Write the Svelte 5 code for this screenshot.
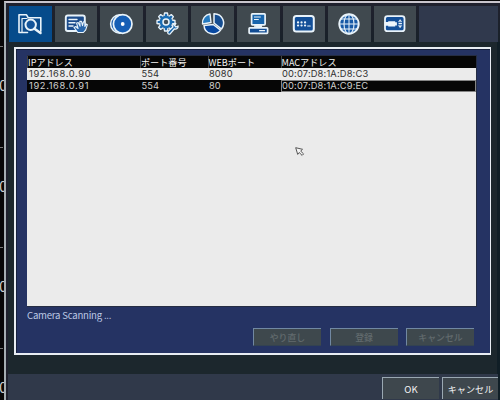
<script>
  const tabs = ['search', 'register', 'disc', 'settings', 'chart', 'system', 'keypad', 'network', 'device'];
  const rows = [
    ['192.168.0.90', '554', '8080', '00:07:D8:1A:D8:C3'],
    ['192.168.0.91', '554', '80', '00:07:D8:1A:C9:EC']
  ];
  const marks = [0, 1, 2, 3];
  const spokes = [0, 45, 90, 135, 180, 225, 270, 315];
</script>

<div class="screen">
  <div class="behind">
    {#each marks as m (m)}
      <div class="mark"><i></i><b>0</b></div>
    {/each}
  </div>
  <div class="window">
    <nav>
      {#each tabs as tab, i (tab)}
        <button class="tab" class:active={i === 0} aria-label={tab}>
          <svg width="26" height="26" viewBox="0 0 26 26" fill="none" stroke="#e9f3fa" stroke-width="1.7" stroke-linejoin="round" stroke-linecap="round">
            {#if tab === 'search'}
              <path d="M10.5 21.5H2V3.8h7.5l1.8 3H23.8v13.5" fill="#0c4b8c" stroke-width="1.6" />
              <path d="M5 21V7.5h5" stroke-width="1.2" />
              <circle cx="13.7" cy="13.8" r="5.2" fill="#14549a" stroke-width="2" />
              <path d="m17.5 17.7 6 4.3" stroke-width="2.6" />
            {:else if tab === 'register'}
              <rect x="2.8" y="4.5" width="19" height="15.5" rx="2" fill="#1c4c8c" stroke-width="1.9" />
              <path d="M6 8.5h8M6 11.8h6M6 15h4" stroke-width="1.4" />
              <path d="m14.8 21.5-3.8-5 1.8-1 2.3 2-1.5-5.4 1.6-.6 1.9 3.7-.3-4.8 1.7-.1 1 4.4.9-3.9 1.5.3v4.3l1.3-2.4 1.2.7-1.7 5.2-2.3 2.6z" fill="#2866ac" stroke-width="1.1" />
            {:else if tab === 'disc'}
              <circle cx="11.9" cy="13" r="9.3" fill="#2463ae" stroke-width="1.5" />
              <circle cx="14.7" cy="13" r="9.3" fill="#155eb5" stroke-width="1.7" />
              <circle cx="14.7" cy="13" r="1.9" fill="#fff" stroke="none" />
            {:else if tab === 'settings'}
              <g transform="translate(1 0)">
                {#each spokes as a (a)}
                  <path d="M9 4.9 9.5 2h3l.5 2.9" fill="#226bb0" stroke-width="1.3" transform={`rotate(${a} 11 11)`} />
                {/each}
                <circle cx="11" cy="11" r="6.2" fill="#176cb5" stroke="none" />
                <circle cx="11" cy="11" r="3" fill="#40505c" stroke-width="1.5" />
                <path d="m13.2 20.3 4.6-4.2c-.5-2.4 1-3.8 3-3.6l-1.2 2.1 1.4 1.4 2.1-1c.2 2.2-1.5 3.6-3.8 3l-4 4.7c-1.7 1.1-3.5-.6-2.1-2.4z" fill="#1763a9" stroke-width="1.3" />
              </g>
            {:else if tab === 'chart'}
              <path d="M14 12V2.7C23 3 26 12 21.5 18z" fill="#154d91" stroke-width="1.5" />
              <path d="m13.2 13.5 7.4 5.6C16 25.5 4.5 23.5 4 14.5z" fill="#0848a0" stroke-width="1.5" />
              <path d="M11 11.5 2.5 13C2 8 5 3.8 10 3z" fill="#257ac0" stroke-width="1.4" />
            {:else if tab === 'system'}
              <g transform="translate(.6 0)">
                <rect x="6" y="2.8" width="13.5" height="11" rx=".7" fill="#1865ad" />
                <path d="M8.8 6h6M8.8 8.5h4" stroke-width="1" />
                <path d="M9.5 14.2h6.5v2.5H9.5z" fill="#e9f3fa" stroke-width="1" />
                <rect x="3.5" y="16.8" width="18.5" height="5.5" rx=".7" fill="#114b93" />
                <path d="M14 19.7h5" stroke-width="1.2" />
              </g>
            {:else if tab === 'keypad'}
              <rect x="2.8" y="5" width="20" height="15.4" rx="2.5" fill="#134f98" stroke-width="2" />
              <path d="M7 11.4h.1M10.5 11.4h.1M14 11.4h.1M7 14.5h.1M10.5 14.5h.1M14 14.5h.1" stroke-width="2.2" />
              <path d="M16.7 15h2.5" stroke-width="1.2" />
            {:else if tab === 'network'}
              <circle cx="13" cy="13" r="9.7" fill="#1759a5" stroke-width="1.9" />
              <path d="M13 3v20M3.2 13h19.6M5 8h16M5 18h16" stroke-width="1" />
              <ellipse cx="13" cy="13" rx="5" ry="9.8" stroke-width="1.1" />
            {:else}
              <rect x="3" y="5.2" width="19.5" height="15" rx="2.5" fill="#134f98" stroke-width="1.8" />
              <path d="M2.5 11h3.7v-.8h7v1.1h1.7v3.2h-1.7v1.1h-7v-.9H2.5z" fill="#edf5fb" stroke="none" />
              <path d="m16.6 10.6 1.5-2 1.5 2zM16.6 14.8l1.5 2 1.5-2z" fill="#edf5fb" stroke-width=".5" />
              <path d="M17 12.7h2.5" stroke-width="1.2" />
            {/if}
          </svg>
        </button>
      {/each}
      <div class="rest"></div>
    </nav>

    <section class="panel">
      <div class="table">
        <div class="row head">
          <span>IPアドレス</span><span>ポート番号</span><span>WEBポート</span><span>MACアドレス</span>
        </div>
        {#each rows as row, i (row[0])}
          <div class="row" class:selected={i === 1}>
            {#each row as cell, c (c)}<span class:ip={c === 0} class:mac={c === 3} class:focus={i === 1 && c === 3}>{cell}</span>{/each}
          </div>
        {/each}
      </div>
      <p>Camera Scanning ...</p>
      <div class="actions">
        <button>やり直し</button><button>登録</button><button>キャンセル</button>
      </div>
    </section>

    <footer><button class="ok">OK</button><button class="cancel">キャンセル</button></footer>
  </div>
  <svg class="pointer" width="10" height="10" viewBox="0 0 10 10" fill="#f5f5f5" stroke="#444" stroke-width=".9"><path d="m.7.7 6.8 1.6-1.8 1.8 2.9 2.8-1.5 1.5-2.9-2.9-1.5 1.9z" /></svg>
</div>

<style>
  .screen { position: relative; display: flex; width: 500px; height: 400px; overflow: hidden; background: #080708; font-family: "Noto Sans CJK JP", sans-serif; }
  .behind { width: 4px; flex: none; overflow: hidden; padding-top: 46px; box-sizing: border-box; }
  .mark { height: 100.7px; color: #ccc; }
  .mark i { display: block; width: 3px; height: 1px; background: #777; }
  .mark b { display: block; margin: 28px 0 0 -1px; font: 15px/20px "Noto Sans CJK JP", sans-serif; }
  .window { display: flex; flex-direction: column; flex: 1; min-width: 0; box-sizing: border-box; border-left: 2px solid #a5adb2; border-top: 2px solid #c9c5cd; margin-top: 1px; background: #1c272d; box-shadow: inset 2px 2px #20212e, inset -3px 0 #101e26; }
  button { box-sizing: border-box; padding: 0; font-family: inherit; border: 0; border-radius: 0; }
  nav { display: flex; flex: none; height: 39px; padding: 3px 2px 0 3px; gap: 3px; box-sizing: border-box; background: linear-gradient(#20212e, #182129); }
  .tab { display: flex; flex: none; align-items: center; justify-content: center; width: 42.6px; height: 36px; background: #40494f; }
  .tab.active { background: #064b8b; }
  .tab svg { flex: none; }
  .rest { flex: 1; background: #30394d; }
  .panel { flex: none; box-sizing: border-box; width: 477px; height: 308px; margin: 5px 0 0 8px; padding: 6px 12px 0 11px; border: 2px solid #e8edf3; border-width: 2px 1px 2px 2px; background: #253363; box-shadow: inset 1px 1px #17213e; }
  .table { width: 450px; height: 252px; background: #ebebeb; box-sizing: border-box; border: 1px solid #252d43; border-width: 1px 1px 1px 0; }
  .row { display: grid; grid-template-columns: 113px 67.5px 73px 1fr; height: 12px; color: #303030; font-family: Inter, sans-serif; font-size: 9.3px; line-height: 12px; letter-spacing: .1px; white-space: pre; }
  .row span { box-sizing: border-box; padding-left: 1.5px; min-width: 0; }
  .row .ip { padding-left: 2px; letter-spacing: .65px; }
  .row .mac { letter-spacing: .17px; }
  .head { background: #060606; color: #f4f4f2; font-family: "Noto Sans CJK JP", sans-serif; font-size: 9.1px; letter-spacing: 0; }
  .row.head span { padding-left: 0; border-left: 1px solid #444; }
  .selected { background: #060606; color: #d0d0cd; }
  .row .focus { border: 1px solid #858585; padding-left: .5px; line-height: 10px; }
  p { margin: 1px 0 0; height: 14px; font-size: 9.6px; letter-spacing: -.22px; line-height: 14px; color: #bdc9e5; white-space: pre; }
  .actions { display: flex; gap: 8.5px; margin: 6px 0 0 226px; }
  .actions button { width: 68px; height: 18px; border-top: 1px solid #7188a2; border-left: 1px solid #7188a2; border-bottom: 1px solid #334251; background: #3e484d; color: #626b6e; font-size: 8.9px; font-weight: 500; line-height: 13px; }
  footer { display: flex; justify-content: flex-end; gap: 3px; flex: none; margin: 19px 2px 0 2px; height: 26px; padding-top: 3px; box-sizing: border-box; background: #30394a; }
  footer button { width: 57px; height: 22px; border: 1px solid #9aa8b2; border-width: 1px 0 0 1px; background: #3e474d; color: #f4f5f6; font-size: 9.1px; line-height: 20px; }
  footer .cancel { width: 56px; }
  footer .ok { font-size: 9.6px; }
  .pointer { position: absolute; left: 295px; top: 147px; }
</style>
